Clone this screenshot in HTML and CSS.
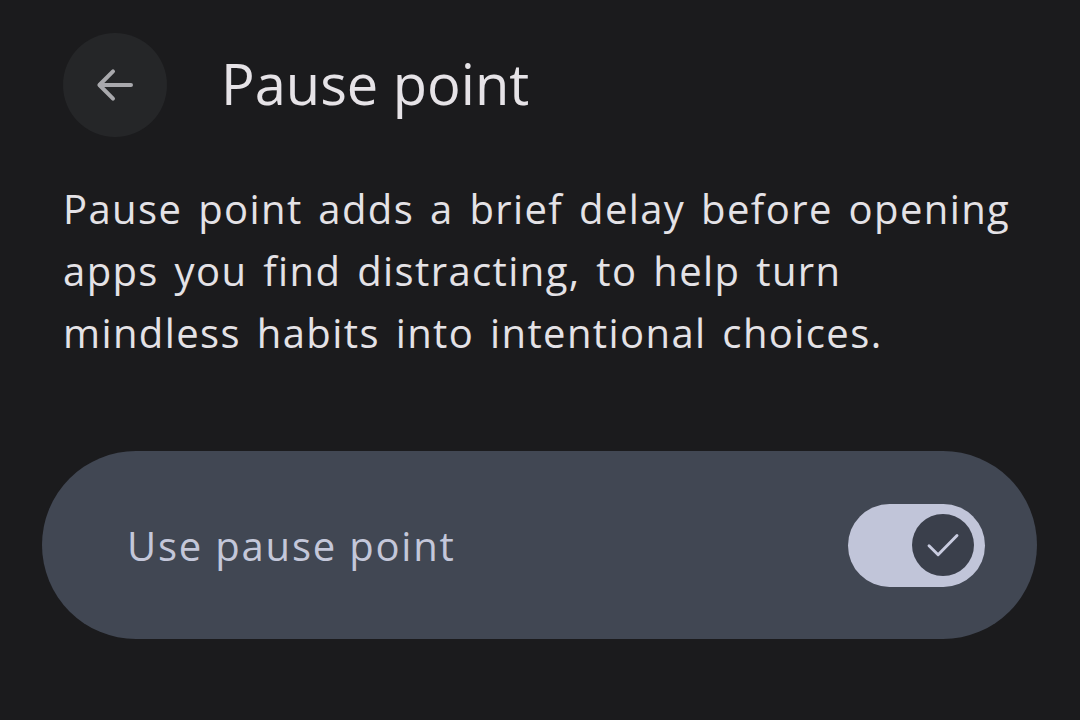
FILE: index.html
```html
<!DOCTYPE html>
<html lang="en">
<head>
<meta charset="utf-8">
<title>Pause point</title>
<link rel="stylesheet" href="styles.css">
</head>
<body>
  <div class="screen">
    <header class="top-bar">
      <button class="back-btn" aria-label="Back">
        <svg viewBox="0 0 24 24" width="48" height="48" aria-hidden="true">
          <path d="M20 12H4.8M11 5.2 4.2 12 11 18.8" fill="none" stroke="currentColor" stroke-width="2" stroke-linecap="round" stroke-linejoin="round"/>
        </svg>
      </button>
      <h1 class="title">Pause point</h1>
    </header>

    <p class="intro">Pause point adds a brief delay before opening apps you find distracting, to help turn mindless habits into intentional choices.</p>

    <div class="toggle-card">
      <span class="toggle-label">Use pause point</span>
      <span class="switch" role="switch" aria-checked="true">
        <span class="thumb">
          <svg viewBox="0 0 24 24" width="56" height="56" aria-hidden="true">
            <path d="M6 12.3l3.9 3.9 8.1-8.3" fill="none" stroke="currentColor" stroke-width="1.25" stroke-linecap="round" stroke-linejoin="round"/>
          </svg>
        </span>
      </span>
    </div>
  </div>
</body>
</html>
```

FILE: styles.css
```css
html, body {
  margin: 0;
  padding: 0;
  background: #1b1b1d;
}

body {
  font-family: "Open Sans", "Noto Sans", sans-serif;
  color: #e4e2e6;
}

.screen {
  width: 1080px;
  height: 720px;
  box-sizing: border-box;
  padding: 32px 42px 0 42px;
  display: flex;
  flex-direction: column;
}

.top-bar {
  display: flex;
  align-items: center;
  gap: 54px;
  padding-left: 21px;
  height: 106px;
}

.back-btn {
  width: 104px;
  height: 104px;
  border-radius: 50%;
  border: none;
  background: #252628;
  color: #a9a9ad;
  display: flex;
  align-items: center;
  justify-content: center;
  padding: 0;
}

.title {
  margin: 0 0 4px 0;
  font-size: 56px;
  font-weight: 400;
  letter-spacing: 0;
  color: #e6e3e7;
}

.intro {
  margin: 40px 0 0 21px;
  font-size: 40px;
  line-height: 62px;
  letter-spacing: 1.4px;
  word-spacing: 4px;
  color: #e4e2e6;
  width: 970px;
}

.toggle-card {
  margin-top: 87px;
  height: 188px;
  width: 995px;
  border-radius: 94px;
  background: #414753;
  display: flex;
  align-items: center;
  justify-content: space-between;
  padding: 0 52px 0 85px;
  box-sizing: border-box;
}

.toggle-label {
  font-size: 40px;
  font-weight: 500;
  color: #c4c7da;
  letter-spacing: 1.8px;
}

.switch {
  width: 137px;
  height: 83px;
  border-radius: 42px;
  background: #c1c5d9;
  display: flex;
  align-items: center;
  justify-content: flex-end;
  padding-right: 11px;
  box-sizing: border-box;
}

.thumb {
  width: 62px;
  height: 62px;
  border-radius: 50%;
  background: #3a3f4b;
  color: #c9cce0;
  display: flex;
  align-items: center;
  justify-content: center;
}
```
